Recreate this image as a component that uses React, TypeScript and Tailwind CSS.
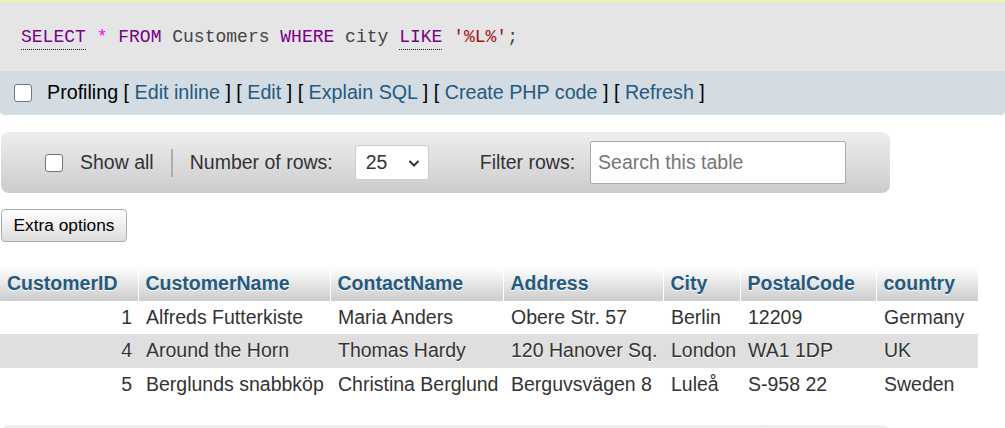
import React from "react";

const Cb = ({ cls }: { cls: string }) => (
  <span className={`inline-block w-[18px] h-[18px] rounded-[3px] border-[1.5px] border-[#767676] bg-white ${cls}`} />
);

const cols = [
  { name: "CustomerID", w: "w-[138px]" },
  { name: "CustomerName", w: "w-[192px]" },
  { name: "ContactName", w: "w-[173px]" },
  { name: "Address", w: "w-[160px]" },
  { name: "City", w: "w-[77px]" },
  { name: "PostalCode", w: "w-[136px]" },
  { name: "country", w: "w-[102px]" },
];

const rows = [
  ["1", "Alfreds Futterkiste", "Maria Anders", "Obere Str. 57", "Berlin", "12209", "Germany"],
  ["4", "Around the Horn", "Thomas Hardy", "120 Hanover Sq.", "London", "WA1 1DP", "UK"],
  ["5", "Berglunds snabbköp", "Christina Berglund", "Berguvsvägen 8", "Luleå", "S-958 22", "Sweden"],
];

const rowH = ["h-[33px]", "h-[34px]", "h-[33px]"];

export default function App() {
  const link = "text-[#235a81]";
  return (
    <div className="w-[1005px] h-[428px] overflow-hidden bg-white font-['Liberation_Sans',Arial,sans-serif]">
      <div className="h-[2px] bg-[#ebf7a6]" />
      <div className="h-[69px] bg-[#e5e5e5] flex items-center pl-[21px]">
        <span className="font-['Liberation_Mono','DejaVu_Sans_Mono',monospace] text-[18px] text-[#444] whitespace-pre leading-none">
          <span className="text-[#770088] border-b border-dotted border-[#222] pb-[2px]">SELECT</span>{" "}
          <span className="text-[#ff00ff]">*</span>{" "}
          <span className="text-[#770088]">FROM</span>{" Customers "}
          <span className="text-[#770088]">WHERE</span>{" city "}
          <span className="text-[#770088] border-b border-dotted border-[#222] pb-[2px]">LIKE</span>{" "}
          <span className="text-[#aa1111]">'%L%'</span>;
        </span>
      </div>
      <div className="h-[44px] bg-[#d3dce3] rounded-b-[4px] flex items-center pl-[14px] text-[19.7px] text-black">
        <Cb cls="" />
        <span className="ml-[15px] whitespace-pre">
          Profiling [ <span className={link}>Edit inline</span> ] [ <span className={link}>Edit</span> ] [{" "}
          <span className={link}>Explain SQL</span> ] [ <span className={link}>Create PHP code</span> ] [{" "}
          <span className={link}>Refresh</span> ]
        </span>
      </div>

      <div className="mt-[17px] ml-[1px] w-[889px] h-[61px] rounded-[8px] bg-gradient-to-b from-[#eeeeee] to-[#cccccc] flex items-center text-[19.5px] text-[#333]">
        <Cb cls="ml-[44px]" />
        <span className="ml-[17px]">Show all</span>
        <span className="ml-[17px] w-[2px] h-[28px] bg-[#b5aaa5]" />
        <span className="ml-[17px]">Number of rows:</span>
        <div className="ml-[22px] w-[74px] h-[35px] bg-white border border-[#cccccc] rounded-[3px] flex items-center justify-between pl-[10px] pr-[7px]">
          <span>25</span>
          <svg width="14" height="14" viewBox="0 0 14 14" className="mt-[1px]">
            <path d="M2.5 5 L7 9.5 L11.5 5" fill="none" stroke="#333" strokeWidth="2" />
          </svg>
        </div>
        <span className="ml-[51px]">Filter rows:</span>
        <div className="ml-[15px] w-[256px] h-[43px] bg-white border border-[#aaaaaa] rounded-[2px] flex items-center pl-[7px] text-[#767676]">
          Search this table
        </div>
      </div>

      <div className="mt-[16px] ml-[1px] w-[126px] h-[33px] rounded-[4px] border border-[#aaaaaa] bg-gradient-to-b from-[#ffffff] to-[#dddddd] flex items-center justify-center text-[17.3px] text-black">
        Extra options
      </div>

      <table className="mt-[25px] table-fixed border-collapse w-[978px] text-[19.5px]">
        <colgroup>
          {cols.map((c) => (
            <col key={c.name} className={c.w} />
          ))}
        </colgroup>
        <thead>
          <tr className="h-[34px]">
            {cols.map((c, i) => (
              <th
                key={c.name}
                className={`text-left font-bold text-[#235a81] px-[7px] bg-gradient-to-b from-[#ffffff] to-[#cccccc] [text-shadow:0_1px_0_#fff] ${i < cols.length - 1 ? "border-r border-white" : ""}`}
              >
                {c.name}
              </th>
            ))}
          </tr>
        </thead>
        <tbody>
          {rows.map((r, ri) => (
            <tr key={ri} className={`${rowH[ri]} ${ri === 1 ? "bg-[#dfdfdf]" : "bg-white"}`}>
              {r.map((v, ci) => (
                <td
                  key={ci}
                  className={`text-[#333] whitespace-nowrap [text-shadow:0_1px_0_#fff] ${ci === 0 ? "text-right pr-[6px]" : "text-left pl-[8px] pr-[6px]"}`}
                >
                  {v}
                </td>
              ))}
            </tr>
          ))}
        </tbody>
      </table>

      <div className="mt-[24px] ml-[1px] w-[889px] h-[61px] rounded-[8px] bg-gradient-to-b from-[#eeeeee] to-[#cccccc]" />
    </div>
  );
}
